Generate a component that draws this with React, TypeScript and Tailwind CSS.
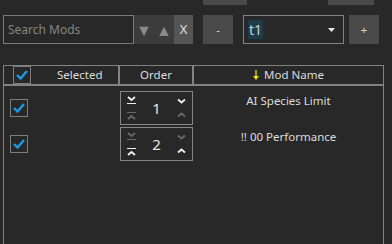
import React from "react";

const font = { fontFamily: '"Noto Sans", "Open Sans", sans-serif' };

function Check() {
    return (
        <svg width="14" height="12" viewBox="0 0 14 12" className="block">
            <polyline points="2,6 5.5,9.5 12,2" fill="none" stroke="#1b9be8" strokeWidth="2.4" />
        </svg>
    );
}

function CheckBox({ className = "" }: { className?: string }) {
    return (
        <div className={"w-[18px] h-[18px] border border-[#7d7d7d] flex items-center justify-center " + className}>
            <Check />
        </div>
    );
}

// chevron with an optional bar above or below
function Chev({ dir, bar, on }: { dir: "up" | "down"; bar?: "top" | "bottom"; on: boolean }) {
    const c = on ? "#f0f0f0" : "#6a6a6a";
    const pts = dir === "down" ? "1,1 4.5,4 8,1" : "1,4 4.5,1 8,4";
    const dy = bar === "top" ? 3 : bar === "bottom" ? 0 : 1.5;
    return (
        <svg width="9" height="8" viewBox="0 0 9 8" className="block">
            {bar === "top" && <line x1="0" y1="0.5" x2="9" y2="0.5" stroke={c} strokeWidth="1" />}
            <polyline points={pts} transform={`translate(0,${dy})`} fill="none" stroke={c} strokeWidth="1.8" />
            {bar === "bottom" && <line x1="0" y1="7.5" x2="9" y2="7.5" stroke={c} strokeWidth="1" />}
        </svg>
    );
}

function OrderBox({ n, first }: { n: number; first: boolean }) {
    return (
        <div className="w-[73px] h-[34px] border border-[#858585] flex items-center justify-between px-[6px]">
            <div className="flex flex-col justify-between h-[24px]">
                <Chev dir="down" bar="bottom" on={first} />
                <Chev dir="up" bar="top" on={!first} />
            </div>
            <span className="text-[15px] text-[#e6e6e6] leading-none">{n}</span>
            <div className="flex flex-col justify-between h-[22px]">
                <Chev dir="down" on={first} />
                <Chev dir="up" on={!first} />
            </div>
        </div>
    );
}

const mods = [
    { name: "AI Species Limit", order: 1 },
    { name: "!! 00 Performance", order: 2 },
];

export default function App() {
    return (
        <div className="w-[392px] h-[244px] bg-[#282828] overflow-hidden text-[11.5px]" style={font}>
            {/* partially visible buttons above */}
            <div className="flex h-[5px]">
                <div className="ml-[203px] w-[44px] bg-[#4a4a4a]"></div>
                <div className="ml-[81px] w-[46px] bg-[#4a4a4a]"></div>
            </div>

            {/* search + profile row */}
            <div className="flex mt-[10px] h-[29px] ml-[3px]">
                <div className="w-[131px] border border-[#7a7a7a] flex items-center pl-[4px] text-[#858585] text-[12px]">
                    Search Mods
                </div>
                <div className="w-[40px] bg-[#3c3c3c] flex items-center justify-around text-[#8a8a8a] text-[16px]">
                    <span>▼</span>
                    <span>▲</span>
                </div>
                <div className="w-[19px] bg-[#555555] flex items-center justify-center text-[#e0e0e0] text-[13px]">X</div>
                <div className="ml-[10px] w-[30px] bg-[#4a4a4a] flex items-center justify-center text-[#d8d8d8]">-</div>
                <div className="ml-[10px] w-[101px] border border-[#828282] flex items-center justify-between pl-[4px] pr-[8px]">
                    <span className="bg-[#1e3d4c] text-[#d0d0d0] text-[14px] h-[19px] w-[15px] flex items-center justify-center">t1</span>
                    <svg width="7" height="4" viewBox="0 0 7 4" className="block">
                        <polygon points="0,0 7,0 3.5,4" fill="#e8e8e8" />
                    </svg>
                </div>
                <div className="ml-[5px] w-[30px] bg-[#4a4a4a] flex items-center justify-center text-[#d8d8d8]">+</div>
            </div>

            {/* mod list */}
            <div className="mt-[21px] ml-[3px] w-[381px] h-[179px] border-l border-r border-[#828282] text-[#dcdcdc]">
                <div className="flex h-[21px] border-t border-b-2 border-[#828282]">
                    <div className="w-[114px] flex items-center">
                        <CheckBox className="ml-[9px]" />
                        <span className="ml-[26px]">Selected</span>
                    </div>
                    <div className="w-[76px] border-l-2 border-r-2 border-[#828282] flex items-center justify-center">Order</div>
                    <div className="flex-1 flex items-center justify-center gap-[5px]">
                        <svg width="6" height="10" viewBox="0 0 6 10" className="block">
                            <line x1="3" y1="0" x2="3" y2="7" stroke="#e6e600" strokeWidth="1.3" />
                            <polygon points="0,6 6,6 3,10" fill="#e6e600" />
                        </svg>
                        <span>Mod Name</span>
                    </div>
                </div>
                <div className="pt-[4px]">
                    {mods.map((m, i) => (
                        <div key={m.name} className="flex h-[36px]">
                            <div className="w-[116px] flex items-center">
                                <CheckBox className="ml-[6px]" />
                            </div>
                            <div className="w-[74px] flex items-center">
                                <OrderBox n={m.order} first={i === 0} />
                            </div>
                            <div className="flex-1 flex justify-center pt-[2px]">{m.name}</div>
                        </div>
                    ))}
                </div>
            </div>
        </div>
    );
}
